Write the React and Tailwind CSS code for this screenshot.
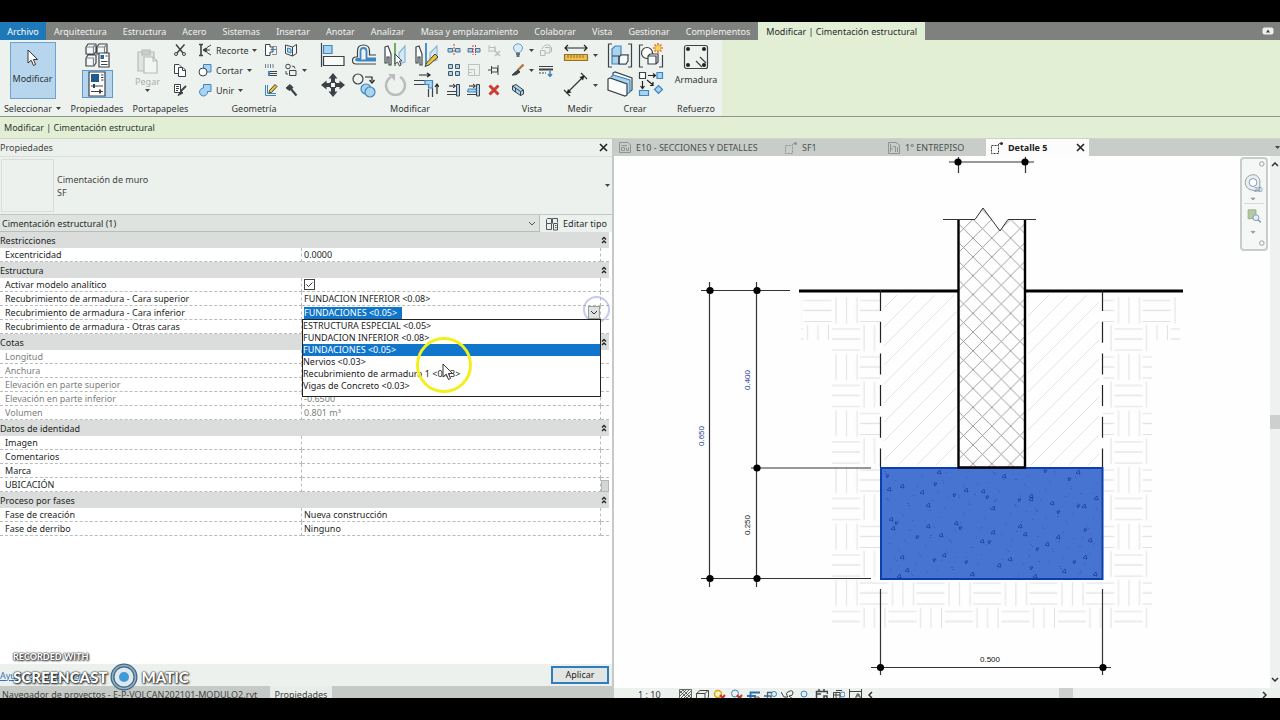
const INK = "#3c4246";
const SKY = "#a9d3ee";
const BLUE = "#3f86bf";

const MENU = [
  "Arquitectura",
  "Estructura",
  "Acero",
  "Sistemas",
  "Insertar",
  "Anotar",
  "Analizar",
  "Masa y emplazamiento",
  "Colaborar",
  "Vista",
  "Gestionar",
  "Complementos",
];

const GROUPS = [
  { title: "Restricciones", rows: [{ label: "Excentricidad", value: "0.0000" }] },
  {
    title: "Estructura",
    rows: [
      { label: "Activar modelo analítico", kind: "check" },
      { label: "Recubrimiento de armadura - Cara superior", value: "FUNDACION INFERIOR <0.08>" },
      { label: "Recubrimiento de armadura - Cara inferior", kind: "combo" },
      { label: "Recubrimiento de armadura - Otras caras", value: "" },
    ],
  },
  {
    title: "Cotas",
    rows: [
      { label: "Longitud", value: "", muted: true },
      { label: "Anchura", value: "", muted: true },
      { label: "Elevación en parte superior", value: "", muted: true },
      { label: "Elevación en parte inferior", value: "-0.6500", muted: true },
      { label: "Volumen", value: "0.801 m³", muted: true },
    ],
  },
  {
    title: "Datos de identidad",
    rows: [
      { label: "Imagen", value: "" },
      { label: "Comentarios", value: "" },
      { label: "Marca", value: "" },
      { label: "UBICACIÓN", value: "" },
    ],
  },
  {
    title: "Proceso por fases",
    rows: [
      { label: "Fase de creación", value: "Nueva construcción" },
      { label: "Fase de derribo", value: "Ninguno" },
    ],
  },
];

const COVERS = [
  "ESTRUCTURA ESPECIAL <0.05>",
  "FUNDACION INFERIOR <0.08>",
  "FUNDACIONES <0.05>",
  "Nervios <0.03>",
  "Recubrimiento de armadura 1 <0.03>",
  "Vigas de Concreto <0.03>",
];

/* ---------- icons ---------- */

const Small = ({ children }) => (
  <svg viewBox="0 0 14 14" className="h-3.5 w-3.5 shrink-0" fill="none" stroke={INK} strokeWidth="1">
    {children}
  </svg>
);

const Large = ({ children }) => (
  <svg viewBox="0 0 26 26" className="h-[26px] w-[26px] shrink-0" fill="none" stroke={INK} strokeWidth="1.2">
    {children}
  </svg>
);

const Caret = () => (
  <svg viewBox="0 0 5 3" className="h-[3px] w-[5px] shrink-0">
    <path d="M0 0H5L2.5 3Z" fill="#444" />
  </svg>
);

const Cursor = ({ className }) => (
  <svg viewBox="0 0 12 18" className={className}>
    <path d="M1 1V14L4.200 11.200L6.500 16.500L8.600 15.500L6.400 10.500H10.600Z" fill="#fff" stroke="#333" />
  </svg>
);

const Cross = () => (
  <svg viewBox="0 0 9 9" className="h-[9px] w-[9px]">
    <path d="M1 1L8 8M8 1L1 8" stroke="#222" strokeWidth="1.6" />
  </svg>
);

const TypeProps = () => (
  <Large>
    <path d="M2 5L4 2H12V10L10 12H2ZM13 5L15 2H23V10L21 12H13ZM2 16L4 13H12V21L10 24H2Z" fill="#f6f8f8" strokeLinejoin="round" />
    <path d="M2 5H9.500V12M13 5H20.500V12M2 16H9.500V24M9.500 5L12 2M20.500 5L23 2" stroke="#7b8286" />
    <path d="M15 11H25V25H15Z" fill="#fff" />
    <path d="M16.500 13H20V17H16.500Z" fill="#2d6596" stroke="none" />
    <path d="M21.500 14H23.500M17 19.500H23.500M17 22.500H23.500" />
  </Large>
);

const PropsSheet = () => (
  <Large>
    <path d="M5 1H21V25H5Z" fill="#fff" />
    <path d="M7 3H15V11H7Z" fill="#20598c" stroke="none" />
    <path d="M17 4H19.500M17 6.500H19.500M17 9H19.500M7 15H19M7 20.500H19" />
    <path d="M10 13V17M16 18.500V22.500" strokeWidth="2" />
  </Large>
);

const Paste = () => (
  <Large>
    <g stroke="#b7bcba">
      <path d="M3 4H19V23H3Z" fill="#dfe3e1" />
      <path d="M7 2H15V7H7Z" fill="#c9cecb" />
      <path d="M9 9H18L22 13V25H9Z" fill="#f3f5f4" />
      <path d="M18 9V13H22" />
    </g>
  </Large>
);

const Scissors = () => (
  <Small>
    <path d="M3 1.500L10 10M11.500 1.500L4 10" strokeWidth="1.500" />
    <circle cx="3" cy="11" r="1.500" />
    <circle cx="11" cy="11" r="1.500" />
  </Small>
);

const Copy = () => (
  <Small>
    <path d="M1.500 1.500H6L9 4.500V10.500H1.500Z" fill="#fff" />
    <path d="M5.500 4.500H10L12.500 7V13.500H5.500Z" fill="#fff" />
    <path d="M9.500 4.500V7.500H12.500" />
  </Small>
);

const MatchType = () => (
  <Small>
    <path d="M1.500 1.500H7.500V9.500H1.500Z" fill="#fff" />
    <path d="M3 3.500H6M3 5.500H6M3 7.500H5" />
    <path d="M13 3L8 8" strokeWidth="1.800" />
    <path d="M8 8L5 12.500L10 10Z" fill={INK} />
  </Small>
);

const Cope = () => (
  <Small>
    <path d="M1 1.500H5M1 12.500H5M3 1.500V12.500" strokeWidth="1.600" />
    <path d="M13 2Q8 4 8 7Q8 10 13 12M6 7H12" />
    <path d="M5 7L8 5V9Z" fill={INK} />
  </Small>
);

const CutGeom = () => (
  <Small>
    <path d="M5.500 1.500H13V9H5.500Z" fill={SKY} stroke={BLUE} />
    <circle cx="5" cy="9" r="4" fill="#fff" />
  </Small>
);

const JoinGeom = () => (
  <Small>
    <path d="M5.500 1.500H13V8.500H9.500A4 4 0 1 1 5.500 5Z" fill={SKY} stroke={BLUE} />
  </Small>
);

const WallJoin = () => (
  <Small>
    <path d="M1.500 1.500H6V4H9V9H6V12.500H1.500Z" fill="#fff" />
    <path d="M13 6.500H7M9 4.500L7 6.500L9 8.500" stroke={BLUE} />
    <path d="M8 3.500H12.500V11.500H8" stroke="#889" />
  </Small>
);

const SplitFace = () => (
  <Small>
    <path d="M1.500 2L8.500 4V13L1.500 10.500ZM8.500 4L12.500 1.500V10.500L8.500 13" fill="#f2f6f8" />
    <path d="M3.500 5L7 6V10L3.500 9Z" fill={SKY} stroke={BLUE} />
  </Small>
);

const BeamJoin = () => (
  <Small>
    <path d="M4 8.500H13M4 12.500H13M6 10.500H13" />
    <path d="M1.500 1V5M4 1V5M6.500 1V5M9 1V5" stroke="#6c8295" />
    <path d="M5 8V13" stroke={BLUE} strokeWidth="2" />
  </Small>
);

const Demolish = () => (
  <Small>
    <circle cx="4" cy="3.500" r="2.300" />
    <path d="M8 3Q11 3 11 5.500" />
    <path d="M5.500 7.500H12V12.500H5.500ZM2 8V11H4" />
  </Small>
);

const Paint = () => (
  <Small>
    <path d="M1.500 2V12.500H12M3.500 2V10.500H12" stroke={BLUE} />
    <path d="M11 1.500L13 3.500L7.500 9.500L5 10L5.500 7.500Z" fill="#f1c232" />
  </Small>
);

const Hammer = () => (
  <Small>
    <path d="M2 5L6 1.500L9 4.500L5.500 7.500Z" fill={INK} />
    <path d="M6.500 5.500L12.500 12.500" strokeWidth="2.200" />
  </Small>
);

const Align = () => (
  <Large>
    <path d="M1.500 1V25" />
    <path d="M3.500 3.500H12V11.500H3.500Z" fill={SKY} stroke={BLUE} />
    <path d="M3.500 14.500H24V23.500H3.500Z" fill="#f8f9f9" />
  </Large>
);

const Offset = () => (
  <Large>
    <path d="M25 22H5Q1.500 22 1.500 18.500Q1.500 15 5 15H6.500V9Q6.500 3 12.500 3Q18.500 3 18.500 9V13H25" />
    <path d="M25 18.500H7Q5 18.500 5 17.500Q5 17 7 17H9.500V9.500Q9.500 6 12.500 6Q15.500 6 15.500 9.500V16.500H25" stroke={BLUE} strokeWidth="1.800" />
  </Large>
);

const MirrorPick = () => (
  <Large>
    <path d="M3 5L6 4L9 12V23H7V15H5V21H3Z" fill="#fff" />
    <path d="M13 1V24" stroke="#4d9b3c" strokeWidth="1.600" />
    <path d="M23 4L17 11V22L23 20Z" fill="#d5e7f3" stroke="#86b7d6" />
    <path d="M13 12V22L15.500 20L17.500 24L19 23L17.500 19H20Z" fill="#fff" strokeWidth="1" />
  </Large>
);

const MirrorDraw = () => (
  <Large>
    <path d="M3 5L6 4L9 12V23H7V15H5V21H3Z" fill="#fff" />
    <path d="M13 1V22" stroke={BLUE} strokeWidth="1.800" />
    <path d="M24 4L17 11V20L24 18Z" fill="#d5e7f3" stroke="#86b7d6" />
    <path d="M22 12L25 15L16 23L12 24.500L13.500 21Z" fill="#f1c232" strokeWidth="1" />
  </Large>
);

const Move = () => (
  <Large>
    <path
      d="M13 1L17.500 6.500H15V10H11V6.500H8.500ZM13 25L17.500 19.500H15V16H11V19.500H8.500ZM1 13L6.500 8.500V11H10V15H6.500V17.500ZM25 13L19.500 8.500V11H16V15H19.500V17.500Z"
      fill={INK}
      stroke="none"
    />
    <path d="M10.500 10.500H15.500V15.500H10.500Z" fill="#fff" />
  </Large>
);

const CopyShape = () => (
  <Large>
    <circle cx="7" cy="7" r="5" />
    <path d="M14 5H21V9M18.500 8L21 11L23.500 8" stroke="#222" />
    <circle cx="15" cy="17" r="5" fill={SKY} stroke={BLUE} />
    <circle cx="19" cy="20" r="5" fill={SKY} stroke={BLUE} />
  </Large>
);

const Rotate = () => (
  <Large>
    <path d="M9 5A9.500 9.500 0 1 0 18 5" stroke="#b9bebc" strokeWidth="2.400" />
    <path d="M6 2H13V9Z" fill="#b9bebc" stroke="none" />
  </Large>
);

const TrimCorner = () => (
  <Large>
    <path d="M6 3H17M14 1L17 3L14 5" stroke="#222" />
    <path d="M1 8.500H12M1 12.500H12M15.500 17V25M19.500 16V25" />
    <path d="M12 8.500H19.500V16H15.500V12.500H12Z" fill={SKY} stroke={BLUE} />
    <path d="M24 22V12M22 15L24 12L26 15" stroke="#222" />
  </Large>
);

const SplitEl = ({ gap }) => (
  <Small>
    <path d="M1 5.500H5.500V9H1ZM8.500 5.500H13V9H8.500Z" fill={SKY} stroke="#4b6f8d" />
    <path d={gap ? "M6 2V12M8.500 2V12" : "M7 1V13"} stroke="#c2453c" strokeDasharray="2 1" />
  </Small>
);

const Unpin = () => (
  <Small>
    <g stroke="#b9bebc">
      <path d="M2 2V9M2 4.500H8V8H2M8 3V9" />
      <path d="M8 8L13 13M13 8L8 13" strokeWidth="1.500" />
    </g>
  </Small>
);

const ArrayEl = () => (
  <Small>
    <path d="M1.500 1.500H5.500V5.500H1.500ZM1.500 8.500H5.500V12.500H1.500Z" fill={SKY} stroke="#456" />
    <path d="M8.500 1.500H12.500V5.500H8.500ZM8.500 8.500H12.500V12.500H8.500Z" fill={SKY} stroke="#456" />
  </Small>
);

const Scale = () => (
  <Small>
    <path d="M1.500 1.500H12.500V12.500H1.500ZM1.500 6.500H7.500V12.500M4.500 9.500H1.500" stroke="#bcc1bf" />
  </Small>
);

const Pin = () => (
  <Small>
    <path d="M1 7H4M4.500 3V11M4.500 5H10.500V9H4.500M11 2V12" />
  </Small>
);

const TrimOne = ({ multi }) => (
  <Small>
    <path d="M2 3H8M6 1L8.500 3L6 5" stroke="#222" />
    <path d="M9.500 1.500H12.500V13H9.500Z" fill={SKY} />
    <path d="M0 8.500H9M0 11.500H9" />
    {multi && <path d="M1 6H9V9H1Z" fill={SKY} stroke={BLUE} />}
  </Small>
);

const Delete = () => (
  <Small>
    <path d="M2.500 2.500L11.500 11.500M11.500 2.500L2.500 11.500" stroke="#cf3a34" strokeWidth="3" />
  </Small>
);

const Bulb = () => (
  <Small>
    <path d="M5 9.500Q2.500 7 2.500 5A4.500 4.200 0 0 1 11.500 5Q11.500 7 9 9.500Z" fill="#d9ebf8" stroke="#6b9cc2" />
    <path d="M5 11H9M5.500 13H8.500" strokeWidth="1.500" />
  </Small>
);

const Displace = () => (
  <Small>
    <path d="M1.500 7.500H6V12.500H1.500ZM6 4.500H11V10H6M3 6Q5 1 10 2L12.500 4.500V9" stroke="#b4bab7" />
  </Small>
);

const Brush = () => (
  <Small>
    <path d="M12.500 1.500L6.500 7.500" stroke="#b07a35" strokeWidth="2.400" />
    <path d="M7 7L9 9Q5 13 1 12Q4 9 7 7Z" fill={INK} />
  </Small>
);

const LineWork = () => (
  <Small>
    <path d="M0 3.500H14" />
    <path d="M0 6.500H14" strokeWidth="2" />
    <path d="M0 10H7" strokeDasharray="2 1" />
    <path d="M11 8V13M9 11L11 13.500L13 11" stroke={BLUE} strokeWidth="1.500" />
  </Small>
);

const SelBox = () => (
  <Small>
    <path d="M1.500 3L5 1.500L12.500 7V11L9.500 12.500L1.500 7Z" fill={SKY} />
    <path d="M1.500 3L9.500 8.500V12.500M9.500 8.500L12.500 7M4.500 5V9" />
  </Small>
);

const Ruler = () => (
  <Large>
    <path d="M2 6H24M5 3L2 6L5 9M21 3L24 6L21 9" stroke="#222" />
    <path d="M1.500 12.500H24.500V18.500H1.500Z" fill="#f1bd4b" stroke="#8f7233" />
    <path d="M5 13V16M8 13V16M11 13V16M14 13V16M17 13V16M20 13V16" stroke="#8f7233" strokeWidth="1" />
  </Large>
);

const Dimension = () => (
  <Large>
    <path d="M4 21L21 4M1 18L7 24M18 1L24 7" stroke="#333" />
    <path d="M3.500 21.500L5 17L8.500 20.500ZM21.500 3.500L16.500 5L20 8.500Z" fill="#222" stroke="none" />
  </Large>
);

const Assembly = () => (
  <Large>
    <path d="M5 1H1.500V24H5M21 1H24.500V24H21" />
    <path d="M5 6L8 3H14V12H21L19 14V21H5Z" fill={SKY} stroke={BLUE} />
    <path d="M12 14L14 12H21V18L19 21H12Z" fill="#f7fafb" />
    <path d="M5 13H12V21" />
  </Large>
);

const GroupNew = () => (
  <Large>
    <path d="M5 2H1.500V24H5M21 24H24.500V12" />
    <circle cx="9" cy="10" r="5.500" fill="#fff" />
    <path d="M10 13L12 11H20V19L18 21H10Z" fill="#f7fafb" />
    <path d="M10 13H18V21" />
    <path d="M20 0V10M15 5H25M16.500 1.500L23.500 8.500M23.500 1.500L16.500 8.500" stroke="#df7d1e" strokeWidth="1.600" />
    <circle cx="20" cy="5" r="2.500" fill="#ffd257" stroke="none" />
  </Large>
);

const Parts = () => (
  <Large>
    <path d="M6 4V2L8 1L25 7V19L22 21" fill="#fff" />
    <path d="M4 6L6 4L23 9V21L20 23" fill={SKY} stroke={BLUE} />
    <path d="M1 8L3 7L20 13V24L18 25L1 19Z" fill="#fafbfb" />
  </Large>
);

const Similar = () => (
  <Large>
    <path d="M1.500 1.500H7.500V7.500H1.500Z" fill="#fff" />
    <path d="M10 4.500H17M15 2.500L17.500 4.500L15 6.500M4.500 10V17M2.500 15L4.500 17.500L6.500 15M9 9L15 14M15 11V14.500H12" stroke="#222" />
    <path d="M19 1.500H24.500V7.500H19ZM1.500 19.500H10.500V24.500H1.500ZM20.500 14.500L24.500 18.500L20.500 22.500L16.500 18.500Z" fill={SKY} stroke={BLUE} />
  </Large>
);

const Rebar = () => (
  <Large>
    <rect x="1.500" y="1.500" width="23" height="23" rx="2" />
    <g fill="#222" stroke="none">
      <circle cx="5" cy="5" r="2" />
      <circle cx="21" cy="5" r="2" />
      <circle cx="5" cy="21" r="2" />
      <circle cx="21" cy="21" r="2" />
    </g>
    <path d="M13 17L19 23M17 13L23 19" />
  </Large>
);

/* ---------- ribbon ---------- */

const Tool = ({ label, drop, children }) => (
  <button aria-label={label} className="flex items-center justify-center gap-1">
    {children}
    {drop && <Caret />}
  </button>
);

const Panel = ({ title, width, drop, children }) => (
  <section className={`flex shrink-0 flex-col bg-[#eef2ef] ${width}`}>
    <div className="flex h-[60px] items-center justify-center">{children}</div>
    <div className="flex h-4 items-center justify-center gap-1">
      {title}
      {drop && <Caret />}
    </div>
  </section>
);

const Ribbon = () => (
  <div className="flex h-[77px] shrink-0 border-b border-[#8f968c] bg-[#e3efd5] whitespace-nowrap text-[#303533]">
    <Panel title="Seleccionar" width="w-[65px]" drop>
      <button className="flex h-[57px] w-[46px] flex-col items-center gap-1 border border-[#6ea3cc] bg-[#b7d5ec] pt-1.5">
        <Cursor className="h-[18px] w-3" />
        Modificar
      </button>
    </Panel>
    <Panel title="Propiedades" width="w-16">
      <div className="flex flex-col items-center gap-0.5">
        <Tool label="Propiedades de tipo">
          <TypeProps />
        </Tool>
        <button aria-label="Propiedades" className="flex h-7 w-[31px] items-center justify-center border border-[#5b9bcb] bg-[#b7d5ec]">
          <PropsSheet />
        </button>
      </div>
    </Panel>
    <Panel title="Portapapeles" width="w-[63px]">
      <div className="flex items-center gap-3">
        <button className="flex flex-col items-center text-[#a9aeab]">
          <Paste />
          Pegar
          <Caret />
        </button>
        <div className="flex flex-col gap-1.5">
          <Tool label="Cortar al portapapeles"><Scissors /></Tool>
          <Tool label="Copiar al portapapeles"><Copy /></Tool>
          <Tool label="Igualar propiedades"><MatchType /></Tool>
        </div>
      </div>
    </Panel>
    <Panel title="Geometría" width="w-[124px]">
      <div className="grid grid-cols-[66px_20px_26px] items-center justify-items-start gap-y-1.5">
        <button className="flex h-3.5 items-center gap-1"><Cope />Recorte<Caret /></button>
        <Tool label="Uniones de muro"><WallJoin /></Tool>
        <Tool label="Dividir cara"><SplitFace /></Tool>
        <button className="flex h-3.5 items-center gap-1"><CutGeom />Cortar<Caret /></button>
        <Tool label="Uniones de viga"><BeamJoin /></Tool>
        <Tool label="Desunir" drop><Demolish /></Tool>
        <button className="flex h-3.5 items-center gap-1"><JoinGeom />Unir<Caret /></button>
        <Tool label="Pintar"><Paint /></Tool>
        <Tool label="Derribar"><Hammer /></Tool>
      </div>
    </Panel>
    <Panel title="Modificar" width="w-[188px]">
      <div className="flex items-center gap-2">
        <div className="grid grid-cols-4 gap-x-[5px] gap-y-1">
          <Tool label="Alinear"><Align /></Tool>
          <Tool label="Desfase"><Offset /></Tool>
          <Tool label="Simetría por eje"><MirrorPick /></Tool>
          <Tool label="Simetría dibujada"><MirrorDraw /></Tool>
          <Tool label="Mover"><Move /></Tool>
          <Tool label="Copiar"><CopyShape /></Tool>
          <Tool label="Rotar"><Rotate /></Tool>
          <Tool label="Recortar esquina"><TrimCorner /></Tool>
        </div>
        <div className="grid grid-cols-3 gap-x-1.5 gap-y-1.5">
          <Tool label="Dividir"><SplitEl /></Tool>
          <Tool label="Dividir con separación"><SplitEl gap /></Tool>
          <Tool label="Desbloquear"><Unpin /></Tool>
          <Tool label="Matriz"><ArrayEl /></Tool>
          <Tool label="Escala"><Scale /></Tool>
          <Tool label="Bloquear"><Pin /></Tool>
          <Tool label="Recortar uno"><TrimOne /></Tool>
          <Tool label="Recortar varios"><TrimOne multi /></Tool>
          <Tool label="Suprimir"><Delete /></Tool>
        </div>
      </div>
    </Panel>
    <Panel title="Vista" width="w-14">
      <div className="grid grid-cols-[28px_14px] justify-items-start gap-y-1.5">
        <Tool label="Ocultar" drop><Bulb /></Tool>
        <Tool label="Desplazar"><Displace /></Tool>
        <Tool label="Modificar gráficos" drop><Brush /></Tool>
        <Tool label="Grosor de línea"><LineWork /></Tool>
        <Tool label="Caja de selección"><SelBox /></Tool>
      </div>
    </Panel>
    <Panel title="Medir" width="w-10">
      <div className="flex flex-col gap-1">
        <Tool label="Medir" drop><Ruler /></Tool>
        <Tool label="Cota" drop><Dimension /></Tool>
      </div>
    </Panel>
    <Panel title="Crear" width="w-[70px]">
      <div className="grid grid-cols-2 gap-x-[5px] gap-y-0.5">
        <Tool label="Crear montaje"><Assembly /></Tool>
        <Tool label="Crear grupo"><GroupNew /></Tool>
        <Tool label="Crear piezas"><Parts /></Tool>
        <Tool label="Crear similar"><Similar /></Tool>
      </div>
    </Panel>
    <Panel title="Refuerzo" width="w-[52px]">
      <button className="flex h-[57px] flex-col items-center gap-0.5 pt-0.5">
        <Rebar />
        Armadura
      </button>
    </Panel>
  </div>
);

const MenuBar = () => (
  <nav className="flex h-[18px] shrink-0 items-stretch bg-[#7f817f] whitespace-nowrap text-[#f0f2f0]">
    <button className="w-[46px] bg-[#1f78b8] text-white">Archivo</button>
    {MENU.map((item) => (
      <button key={item} className="px-2">{item}</button>
    ))}
    <button className="bg-[#e3efd5] px-2 text-[#24292b]">Modificar | Cimentación estructural</button>
    <button aria-label="Minimizar cinta" className="mr-1.5 ml-auto flex items-center">
      <svg viewBox="0 0 12 8" className="h-2 w-3">
        <rect x="0.500" y="0.500" width="11" height="7" rx="2" fill="#eee" />
        <path d="M4 5.500L6 2.500L8 5.500Z" fill="#444" />
      </svg>
    </button>
  </nav>
);

/* ---------- properties palette ---------- */

const CoverCombo = () => (
  <div className="relative flex h-[13px] items-center justify-between">
    <input
      role="combobox"
      aria-label="Recubrimiento de armadura - Cara inferior"
      aria-expanded="true"
      aria-controls="cover-list"
      readOnly
      value="FUNDACIONES <0.05>"
      className="h-3 w-[98px] bg-[#0f76cc] text-white outline-none"
    />
    <button aria-label="Desplegar" className="flex h-[13px] w-3 items-center justify-center border border-[#9a9e9b] bg-[#dfe2e0]">
      <svg viewBox="0 0 8 5" className="h-[5px] w-2">
        <path d="M1 1L4 4L7 1" fill="none" stroke="#333" />
      </svg>
    </button>
    <ul id="cover-list" role="listbox" className="absolute top-[13px] -right-px -left-0.5 z-10 h-[78px] border border-[#222] bg-white text-[#222]">
      {COVERS.map((name, i) => (
        <li key={name} role="option" aria-selected={i === 2} className={i === 2 ? "h-3 bg-[#0f76cc] leading-3 text-white" : "h-3 leading-3"}>
          {name}
        </li>
      ))}
    </ul>
    <span className="pointer-events-none absolute -top-2.5 -right-2.5 h-[27px] w-[27px] rounded-full border-2 border-[#8f96d6]/50" />
    <span className="pointer-events-none absolute top-[31px] left-[112px] z-20 h-14 w-14 rounded-full border-[3px] border-[#f3ee1c]" />
    <Cursor className="pointer-events-none absolute top-[57px] left-[138px] z-20 h-[18px] w-3" />
  </div>
);

const PropertyValue = ({ row }) => {
  if (row.kind === "combo") return <CoverCombo />;
  if (row.kind === "check") {
    return (
      <div className="relative flex h-[13px] items-center">
        <input
          type="checkbox"
          defaultChecked
          aria-label={row.label}
          className="h-[11px] w-[11px] appearance-none border border-[#444] bg-white"
        />
        <svg viewBox="0 0 9 9" className="pointer-events-none absolute left-px h-[9px] w-[9px]">
          <path d="M1.500 4.500L3.500 6.500L7.500 2.500" fill="none" stroke="#333" />
        </svg>
      </div>
    );
  }
  return row.value;
};

const PropertyTable = () => (
  <table className="w-full table-fixed border-separate border-spacing-0 text-left leading-[13px] text-[#1c1f1e]">
    <colgroup>
      <col className="w-[302px]" />
      <col />
      <col className="w-2" />
    </colgroup>
    {GROUPS.map((group) => (
      <tbody key={group.title}>
        <tr className="h-4 bg-[#dadddb]">
          <th colSpan={2} className="p-0 font-normal">{group.title}</th>
          <td className="p-0">
            <svg viewBox="0 0 6 8" className="block h-2 w-1.5">
              <path d="M1 3.500L3 1.500L5 3.500M1 7L3 5L5 7" fill="none" stroke="#222" strokeWidth="1.300" />
            </svg>
          </td>
        </tr>
        {group.rows.map((row) => (
          <tr key={row.label} className={row.muted ? "h-3.5 text-[#7b7f7d]" : "h-3.5"}>
            <th className="border-r border-b border-dashed border-[#b9bcba] p-0 pl-[5px] font-normal">{row.label}</th>
            <td className="border-r border-b border-dashed border-[#b9bcba] p-0 pl-0.5">
              <PropertyValue row={row} />
            </td>
            <td className="border-b border-dashed border-[#b9bcba] p-0" />
          </tr>
        ))}
      </tbody>
    ))}
  </table>
);

const Properties = () => (
  <aside className="flex w-[614px] shrink-0 flex-col border-r-2 border-[#c6c9c7] bg-[#edf1ee]">
    <div className="flex h-[18px] shrink-0 items-center justify-between border-b border-[#dadedb] pr-1 text-[#3f4442]">
      Propiedades
      <button aria-label="Cerrar propiedades"><Cross /></button>
    </div>
    <div className="flex h-[57px] shrink-0 items-center gap-[3px] pr-0.5 pl-px text-[#3f4442]">
      <div className="h-[53px] w-[53px] border border-[#dadedb]" />
      <p className="flex-1 leading-[13px]">
        Cimentación de muro
        <br />
        SF
      </p>
      <button aria-label="Selector de tipo"><Caret /></button>
    </div>
    <div className="flex h-[18px] shrink-0 border-t border-[#c3c7c4]">
      <label className="relative flex flex-1 items-center border-r border-b border-[#b9bdba] bg-[#dfe3e0]">
        <select aria-label="Filtro de propiedades" className="w-full appearance-none bg-transparent pl-0.5 text-[#262a29]">
          <option>Cimentación estructural (1)</option>
        </select>
        <svg viewBox="0 0 8 5" className="pointer-events-none absolute right-[3px] h-[5px] w-2">
          <path d="M1 1L4 4L7 1" fill="none" stroke="#555" />
        </svg>
      </label>
      <button className="flex w-[72px] items-center justify-center gap-1 text-[#262a29]">
        <svg viewBox="0 0 14 14" className="h-3.5 w-3.5" fill="none" stroke="#4f575b">
          <path d="M1.500 2.500L2.500 1.500H6.500V6.500H1.500ZM7.500 6.500V1.500H12.500V5.500M1.500 6.500V12.500H6.500V7M8.500 6.500H12.500V13H8.500ZM10 8.500H11.500M10 10.500H11.500" />
        </svg>
        Editar tipo
      </button>
    </div>
    <div className="relative min-h-0 flex-1 bg-white pr-[3px]">
      <PropertyTable />
      <span className="absolute top-[248px] right-[3px] h-3 w-2 border border-[#b3b6b4] bg-[#d3d6d4]" />
    </div>
    <div className="flex h-[22px] shrink-0 items-center justify-between pr-[3px]">
      <a href="#ayuda" className="text-[#2f74b5] underline">Ayuda de propiedades</a>
      <button className="h-[18px] w-[58px] border-2 border-[#2f7cc0] bg-[#e2e6e3] leading-3 text-[#222]">Aplicar</button>
    </div>
    <div className="flex h-3 shrink-0 items-start overflow-hidden bg-[#c6cac7] whitespace-nowrap text-[#3f4442]">
      <button className="h-5 w-[270px] shrink-0 bg-[#c6cac7] pb-1 pl-0.5 text-left">Navegador de proyectos - E-P-VOLCAN202101-MODULO2.rvt</button>
      <button className="h-5 w-[62px] bg-[#e9edea] pb-1">Propiedades</button>
    </div>
  </aside>
);

/* ---------- drawing area ---------- */

const ShTab = ({ children }) => (
  <svg viewBox="0 0 14 14" className="h-3.5 w-3.5 shrink-0" fill="none" stroke="#8f9391">
    {children}
  </svg>
);

const SheetIcon = () => (
  <ShTab>
    <path d="M1.500 1.500H10L12.500 4V11.500H1.500ZM3.500 4.500H9M3.500 6.500H6.500V9.500H3.500ZM8.500 6.500V9.500H10.500V6.500" />
  </ShTab>
);

const PlanIcon = () => (
  <ShTab>
    <path d="M1.500 1.500H9L12.500 4V12.500H1.500ZM3.500 3V11M5.500 5.500H8.500V11M3.500 8H6M10.500 6V11" />
  </ShTab>
);

const CalloutIcon = ({ dark }) => (
  <ShTab>
    <path d="M1.500 4.500H8.500V12.500H1.500Z" strokeDasharray="2 1" stroke={dark ? "#333" : "#8f9391"} />
    <path d="M8 4L9.500 2.500H13" stroke={dark ? "#333" : "#8f9391"} />
    <circle cx="11.500" cy="2.500" r="1.500" fill={dark ? "#333" : "#8f9391"} stroke="none" />
  </ShTab>
);

const ViewTabs = () => (
  <div className="flex h-[17px] shrink-0 items-stretch bg-[#c9cdca] whitespace-nowrap text-[#4c504e]">
    <button className="flex w-[166px] items-center gap-1 pl-1"><SheetIcon />E10 - SECCIONES Y DETALLES</button>
    <button className="flex w-[103px] items-center gap-1 pl-1"><CalloutIcon />SF1</button>
    <button className="flex w-[103px] items-center gap-1 pl-1"><PlanIcon />1° ENTREPISO</button>
    <div className="flex w-[103px] items-center bg-[#fbfcfb] pr-1 pl-1 text-[#222]">
      <button className="flex flex-1 items-center gap-1 font-bold"><CalloutIcon dark />Detalle 5</button>
      <button aria-label="Cerrar vista"><Cross /></button>
    </div>
    <button aria-label="Lista de vistas" className="ml-auto"><Caret /></button>
  </div>
);

const NODES = [
  [958, 162], [1025, 162],
  [710, 290.5], [757, 290.5], [757, 468],
  [710, 578.5], [757, 578.5],
  [880.5, 667.5], [1103, 667.5],
];

const STONES = [
  [887, 476], [889, 489], [902, 486], [935, 484], [939, 472], [922, 492], [954, 495], [966, 490],
  [983, 491], [987, 497], [1004, 476], [993, 508], [1019, 500], [1031, 496], [1031, 499], [1069, 479],
  [1078, 472], [1052, 503], [1078, 506], [1084, 506], [1096, 498], [1058, 512], [891, 519], [893, 528],
  [896, 523], [928, 505], [928, 526], [917, 537], [941, 535], [956, 523], [960, 528], [993, 532],
  [982, 541], [989, 542], [1020, 526], [1025, 534], [1037, 549], [1047, 544], [1058, 537], [1085, 530],
  [1090, 540], [1085, 557], [1074, 562], [1064, 571], [1095, 574], [1031, 568], [1010, 559], [999, 565],
  [966, 562], [972, 574], [944, 555], [934, 560], [907, 570], [902, 557], [1045, 471], [899, 576], [1035, 576],
];

// small pseudo-random speckle, same on every render
const SPECKS = Array.from({ length: 190 }, (_, i) => [
  884 + ((i * 137 + (i % 7) * 31) % 215),
  471 + ((i * 61 + (i % 11) * 17) % 105),
]);

const Drawing = () => (
  <svg viewBox="614 156 656 532" className="absolute inset-0 h-full w-full" fill="none">
    <defs>
      <pattern id="cross" x="973" y="407.300" width="18.800" height="18.800" patternUnits="userSpaceOnUse">
        <path d="M0 0L18.800 18.800M18.800 0L0 18.800" stroke="#949494" strokeWidth="0.900" />
      </pattern>
      <pattern id="diag" x="880" y="293" width="19" height="19" patternUnits="userSpaceOnUse">
        <path d="M0 19L19 0" stroke="#e1e4e1" />
      </pattern>
      <pattern id="earth" x="832" y="438" width="56.500" height="56.500" patternUnits="userSpaceOnUse">
        <path
          d="M0 4H28M0 14H28M0 25H28M28 32H56M28 42H56M28 53H56M32 0V26M42.500 0V26M53 0V26M4 29V55M14.500 29V55M25 29V55"
          stroke="#dfe2df"
        />
      </pattern>
    </defs>

    <path
      d="M801 295H880V582H1103V295H1180V340H1152V628H832V340H801Z"
      fill="url(#earth)"
    />
    <path d="M884 295H956V465H884ZM1028 295H1099V465H1028Z" fill="url(#diag)" />
    <path d="M958 219H975L983 208L1000 231L1008 219H1025V468H958Z" fill="url(#cross)" />

    <rect x="881" y="468" width="221.500" height="111" fill="#4874d1" stroke="#0c3fae" strokeWidth="2" />
    {SPECKS.map(([x, y], i) => (
      <rect key={i} x={x} y={y} width={i % 5 ? 1 : 2} height="1" fill="#3460bd" />
    ))}
    {STONES.map(([x, y], i) => (
      <path
        key={i}
        d={i % 3 ? `M${x - 2} ${y + 1}L${x + 1} ${y - 2}L${x + 2} ${y + 2}Z` : `M${x - 1} ${y - 1}H${x + 2}L${x} ${y + 2}Z`}
        stroke="#1f449f"
        strokeWidth="0.900"
      />
    ))}

    <path d="M799 291H958M1025 291H1183" stroke="#000" strokeWidth="3" />
    <path d="M958.500 219V467.500H1025V219" stroke="#000" strokeWidth="2.400" />
    <path d="M943 219.500H975L983 208L1000 231L1008 219.500H1036" stroke="#333" />
    <path d="M880.500 290V467M1102.500 290V467" stroke="#222" strokeWidth="1.200" strokeDasharray="21 10.700" />

    <path
      d="M949 162H1034M958.500 157V173M1025.500 157V173M701 290.500H790M751 468H871M701 578.500H871M709.500 282V587M756.500 282V587M871 667.500H1111M880.500 589V675M1102.500 589V675"
      stroke="#333"
      strokeWidth="1.200"
    />
    {NODES.map(([x, y]) => (
      <circle key={`${x}-${y}`} cx={x} cy={y} r="3.600" fill="#000" />
    ))}

    <g fontFamily="'Liberation Sans', Arial, sans-serif" fontSize="8" textAnchor="middle">
      <text x="990" y="662" fill="#111">0.500</text>
      <text transform="translate(750 525) rotate(-90)" fill="#111">0.250</text>
      <text transform="translate(750 380) rotate(-90)" fill="#1d3b94">0.400</text>
      <text transform="translate(704 436) rotate(-90)" fill="#1d3b94">0.650</text>
    </g>
  </svg>
);

const NavBar = () => (
  <div className="absolute top-px right-0.5 flex h-[94px] w-7 flex-col items-center justify-between rounded border-2 border-[#c8ccca] bg-[#f4f7f5] py-0.5">
    <svg viewBox="0 0 22 88" className="h-full w-[22px]" fill="none" stroke="#9aa0a3">
      <circle cx="19" cy="3" r="2.300" />
      <circle cx="19" cy="84" r="2.300" />
      <path d="M10 14A8 8 0 1 0 10 30H17V20A7 7 0 0 0 10 14Z" fill="#e9eef2" />
      <circle cx="10" cy="22" r="4" fill="#fff" stroke="#7f9cb8" />
      <text x="11" y="32" fontSize="7" fontFamily="'Liberation Sans', sans-serif" fill="#6b8db3" stroke="none">2D</text>
      <path d="M8 38H12L10 40ZM8 72H12L10 74Z" fill="#888" />
      <path d="M1 43.500H21" stroke="#d5d8d6" />
      <path d="M5 50H13V59H5Z" fill="#b5c7a4" stroke="#9ab082" />
      <circle cx="13" cy="58" r="3" fill="#e8f0f5" stroke="#7d9db5" />
      <path d="M15 60L18 63" stroke="#7d9db5" strokeWidth="1.500" />
    </svg>
  </div>
);

const VIEW_ICONS = [
  <path key="a" d="M0.500 0.500H12.500V12.500H0.500ZM1 4L4 1M1 7L7 1M1 10L10 1M2 12L12 2M5 12L12 5M8 12L12 8M4 1L12 9M1 2L11 12" strokeWidth="0.800" />,
  <path key="b" d="M0.500 4.500L4 1.500H12.500V8L9 12.500H0.500ZM0.500 4.500H9V12M9 4.500L12 1.500" />,
  <g key="c"><circle cx="5" cy="5" r="3.500" stroke="#dca21e" strokeWidth="1.500" fill="#fff3c0" /><path d="M7 6L12 12M12 6L7 12" stroke="#c93030" strokeWidth="2" /></g>,
  <g key="d"><circle cx="5" cy="4.500" r="3.500" stroke={BLUE} /><path d="M7 6L12 12M12 6L7 12" stroke="#c93030" strokeWidth="2" /></g>,
  <g key="e"><path d="M3.500 13V3.500H13M0 7H8V13" stroke="#2f6fb0" strokeWidth="1.800" /><path d="M9 8H12V12" stroke="#c93030" /></g>,
  <g key="f"><path d="M3.500 13V3.500H8M0 7H7V13" stroke="#41647f" strokeWidth="1.300" /><circle cx="10" cy="5" r="2.500" stroke={BLUE} /></g>,
  <path key="g" d="M0 3L3 8L7 8Q4 4 7 3Q12 0 12 4Q12 7 8 7L13 11" />,
  <g key="h"><circle cx="6" cy="5" r="3" stroke={BLUE} fill="#e0f0fa" /><path d="M4.500 9.500H7.500" /></g>,
  <path key="i" d="M1.500 12V2.500H12.500V5M2 5H6M4 0V3M9 0V3M9 7H12V10H9Z" strokeWidth="1.500" />,
  <g key="j"><path d="M1.500 3.500H8V12H1.500ZM4 1.500H10M1.500 6H8M4 4V12" /><circle cx="10.500" cy="5.500" r="2.500" stroke={BLUE} /></g>,
  <path key="k" d="M0.500 0V13M12.500 0V13M1 2.500H12M7 7H11V12H7ZM8 7V5H10V7" />,
];

const ViewControls = () => (
  <div className="flex h-2.5 shrink-0 items-start overflow-hidden bg-[#edf1ee] text-[#333]">
    <span className="h-3.5 w-[65px] shrink-0 pl-6 leading-[14px]">1 : 10</span>
    <div className="flex shrink-0 gap-1 pt-px">
      {VIEW_ICONS.map((icon, i) => (
        <svg key={i} viewBox="0 0 13 13" className="h-[13px] w-[13px]" fill="none" stroke="#444">
          {icon}
        </svg>
      ))}
      <svg viewBox="0 0 13 13" className="h-[13px] w-[13px]" fill="none" stroke="#333" strokeWidth="1.500">
        <path d="M6 3L3 6L6 9" />
      </svg>
    </div>
    <div className="flex h-full flex-1 justify-center bg-[#ebeeec] pr-2">
      <span className="h-full w-3.5 bg-[#cdcfce]" />
    </div>
    <svg viewBox="0 0 20 10" className="h-2.5 w-5 shrink-0" fill="none" stroke="#333" strokeWidth="1.500">
      <path d="M3 4L6 7L3 10" />
    </svg>
  </div>
);

const View = () => (
  <main className="flex min-w-0 flex-1 flex-col bg-white">
    <ViewTabs />
    <div className="flex min-h-0 flex-1">
      <div className="relative min-w-0 flex-1 bg-[#fdfefd]">
        <Drawing />
        <NavBar />
      </div>
      <div className="flex w-2.5 shrink-0 flex-col items-center justify-between bg-[#eef1ef] py-1.5">
        <svg viewBox="0 0 8 5" className="h-[5px] w-2"><path d="M1 4L4 1L7 4" fill="none" stroke="#333" strokeWidth="1.500" /></svg>
        <span className="h-3.5 w-full bg-[#cdcfce]" />
        <svg viewBox="0 0 8 5" className="h-[5px] w-2"><path d="M1 1L4 4L7 1" fill="none" stroke="#333" strokeWidth="1.500" /></svg>
      </div>
    </div>
    <ViewControls />
  </main>
);

const Watermark = () => (
  <div className="pointer-events-none absolute bottom-[7px] left-[13px] z-30 font-['Lato',sans-serif] font-black text-white [text-shadow:0_0_2px_#222,1px_1px_2px_#222,0_0_1px_#222]">
    <p className="text-[9px] leading-3">RECORDED WITH</p>
    <div className="flex items-center gap-[3px] text-[15px] leading-7">
      SCREENCAST
      <svg viewBox="0 0 28 28" className="h-7 w-7">
        <circle cx="14" cy="14" r="11.500" fill="#dfe8ee" stroke="#42677f" strokeWidth="4" />
        <circle cx="14" cy="14" r="11.500" fill="none" stroke="#8fb3c9" strokeWidth="1.500" />
        <circle cx="14" cy="14" r="5" fill="#3f9bd8" />
      </svg>
      MATIC
    </div>
  </div>
);

export default function App() {
  return (
    <div className="flex h-screen flex-col overflow-hidden bg-black py-[22px] font-['Noto_Sans','Open_Sans',sans-serif] text-[9px] leading-[15px]">
      <MenuBar />
      <Ribbon />
      <div className="flex h-[22px] shrink-0 items-center border-b border-[#cdd3c8] bg-[#e3efd5] pl-1 text-[#303533]">
        Modificar | Cimentación estructural
      </div>
      <div className="relative flex min-h-0 flex-1">
        <Properties />
        <View />
        <Watermark />
      </div>
    </div>
  );
}
